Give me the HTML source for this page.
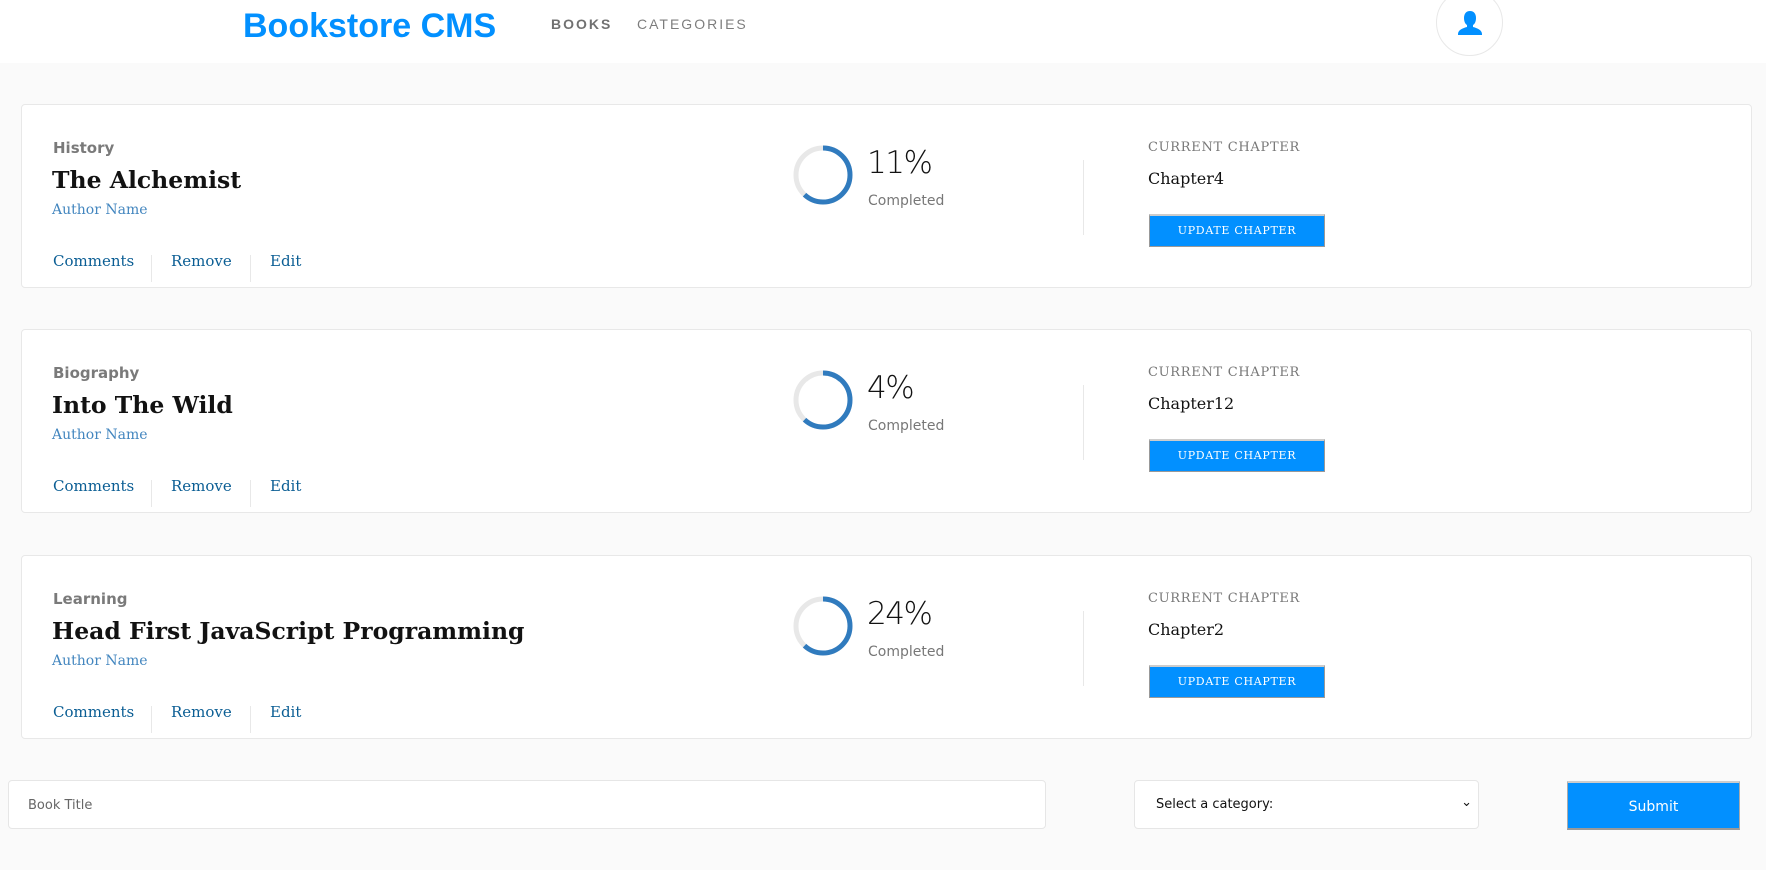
<!DOCTYPE html>
<html><head><meta charset="utf-8"><style>
*{box-sizing:border-box;margin:0;padding:0}
body{width:1766px;height:870px;background:#fafafa;position:relative;overflow:hidden;font-family:"DejaVu Serif",serif}
.a{position:absolute;white-space:nowrap}
header{position:absolute;left:0;top:0;width:1766px;height:63px;background:#fff}
.logo{left:243px;top:7px;font:bold 34px "Liberation Sans",sans-serif;color:#0290ff;letter-spacing:0px}
.nav{top:16px;font:14px "Liberation Sans",sans-serif;letter-spacing:2px;color:#121212}
.av{left:1436px;top:-11px;width:67px;height:67px;border-radius:50%;border:1px solid #e8e8e8;background:#fff}
.card{position:absolute;left:21px;width:1731px;height:184px;background:#fff;border:1px solid #e8e8e8;border-radius:4px}
.cat{left:31px;top:34px;font:bold 15px "DejaVu Sans",sans-serif;color:#7a7a7a}
.tit{left:30px;top:61px;font:bold 23.5px "DejaVu Serif",serif;color:#121212}
.au{left:30px;top:97px;font:14px "DejaVu Serif",serif;color:#4386bf}
.lk{top:147px;font:15px "DejaVu Serif",serif;color:#0b5e94}
.sep{top:150px;width:1px;height:27px;background:#e8e8e8}
.pc{left:845px;top:40px;font:300 31px "DejaVu Sans",sans-serif;color:#121212;letter-spacing:-1.5px}
.cp{left:846px;top:88px;font:14px "DejaVu Sans",sans-serif;color:#777}
.vd{left:1061px;top:55px;width:1px;height:75px;background:#e8e8e8}
.cc{left:1126px;top:35px;font:13px "DejaVu Serif",serif;color:#777;letter-spacing:0.7px}
.ch{left:1126px;top:64px;font:16px "DejaVu Serif",serif;color:#121212}
.btn{left:1127px;top:109px;width:176px;height:33px;background:#0290ff;border:1px solid #999;border-top:2px solid #ccc;color:#fff;font:11px "DejaVu Serif",serif;letter-spacing:0.7px;text-align:center;line-height:29px}
.ring{left:769px;top:38px}
</style></head><body>
<header>
<div class="a logo">Bookstore CMS</div>
<div class="a nav" style="left:551px;font-weight:bold;color:#121212;opacity:.6">BOOKS</div>
<div class="a nav" style="left:637px;opacity:.55">CATEGORIES</div>
<div class="a av"><svg style="position:absolute;left:20px;top:20px" width="26" height="26" viewBox="0 0 26 26"><path d="M13 1c4 0 6 3 6 7 0 3-1 6-3 7v2c4 1 9 3 9 7v1H1v-1c0-4 5-6 9-7v-2c-2-1-3-4-3-7 0-4 2-7 6-7z" fill="#0290ff"/></svg></div>
</header>

<div class="card" style="top:104px">
<div class="a cat">History</div><div class="a tit">The Alchemist</div><div class="a au">Author Name</div>
<div class="a lk" style="left:31px">Comments</div><div class="a sep" style="left:129px"></div>
<div class="a lk" style="left:149px">Remove</div><div class="a sep" style="left:228px"></div>
<div class="a lk" style="left:248px">Edit</div>
<svg class="a ring" width="64" height="64"><circle cx="32" cy="32" r="27" fill="none" stroke="#e8e8e8" stroke-width="5"/><circle cx="32" cy="32" r="27" fill="none" stroke="#307bbe" stroke-width="5" stroke-dasharray="105 200" transform="rotate(-90 32 32)"/></svg>
<div class="a pc">11%</div><div class="a cp">Completed</div><div class="a vd"></div>
<div class="a cc">CURRENT CHAPTER</div><div class="a ch">Chapter4</div><div class="a btn">UPDATE CHAPTER</div>
</div>

<div class="card" style="top:329px">
<div class="a cat">Biography</div><div class="a tit">Into The Wild</div><div class="a au">Author Name</div>
<div class="a lk" style="left:31px">Comments</div><div class="a sep" style="left:129px"></div>
<div class="a lk" style="left:149px">Remove</div><div class="a sep" style="left:228px"></div>
<div class="a lk" style="left:248px">Edit</div>
<svg class="a ring" width="64" height="64"><circle cx="32" cy="32" r="27" fill="none" stroke="#e8e8e8" stroke-width="5"/><circle cx="32" cy="32" r="27" fill="none" stroke="#307bbe" stroke-width="5" stroke-dasharray="105 200" transform="rotate(-90 32 32)"/></svg>
<div class="a pc">4%</div><div class="a cp">Completed</div><div class="a vd"></div>
<div class="a cc">CURRENT CHAPTER</div><div class="a ch">Chapter12</div><div class="a btn">UPDATE CHAPTER</div>
</div>

<div class="card" style="top:555px">
<div class="a cat">Learning</div><div class="a tit">Head First JavaScript Programming</div><div class="a au">Author Name</div>
<div class="a lk" style="left:31px">Comments</div><div class="a sep" style="left:129px"></div>
<div class="a lk" style="left:149px">Remove</div><div class="a sep" style="left:228px"></div>
<div class="a lk" style="left:248px">Edit</div>
<svg class="a ring" width="64" height="64"><circle cx="32" cy="32" r="27" fill="none" stroke="#e8e8e8" stroke-width="5"/><circle cx="32" cy="32" r="27" fill="none" stroke="#307bbe" stroke-width="5" stroke-dasharray="105 200" transform="rotate(-90 32 32)"/></svg>
<div class="a pc">24%</div><div class="a cp">Completed</div><div class="a vd"></div>
<div class="a cc">CURRENT CHAPTER</div><div class="a ch">Chapter2</div><div class="a btn">UPDATE CHAPTER</div>
</div>

<div class="a" style="left:8px;top:780px;width:1038px;height:49px;background:#fff;border:1px solid #e6e6e6;border-radius:4px;font:13px 'DejaVu Sans',sans-serif;color:#666;padding:17px 0 0 19px">Book Title</div>
<div class="a" style="left:1134px;top:780px;width:345px;height:49px;background:#fff;border:1px solid #e6e6e6;border-radius:4px;font:13px 'DejaVu Sans',sans-serif;color:#111;padding:16px 0 0 21px">Select a category:<span style="position:absolute;right:6px;top:14px;font-size:13px">&#8964;</span></div>
<div class="a" style="left:1567px;top:781px;width:173px;height:49px;background:#0290ff;border-top:2px solid #ccc;border-bottom:2px solid #999;border-left:1px solid #aaa;border-right:1px solid #aaa;color:#fff;font:14px 'DejaVu Sans',sans-serif;text-align:center;line-height:48px">Submit</div>
</body></html>
